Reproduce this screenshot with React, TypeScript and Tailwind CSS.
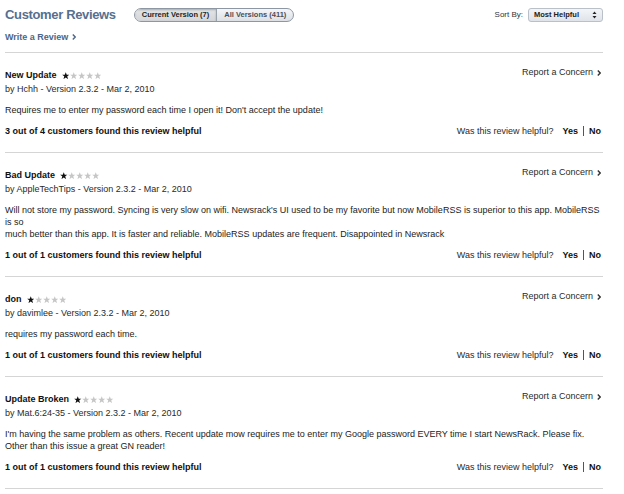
import React from "react";

type Review = {
  title: string;
  author: string;
  body: string[];
  helpful: string;
};

const reviews: Review[] = [
  {
    title: "New Update",
    author: "by Hchh - Version 2.3.2 - Mar 2, 2010",
    body: ["Requires me to enter my password each time I open it! Don't accept the update!"],
    helpful: "3 out of 4 customers found this review helpful",
  },
  {
    title: "Bad Update",
    author: "by AppleTechTips - Version 2.3.2 - Mar 2, 2010",
    body: [
      "Will not store my password. Syncing is very slow on wifi. Newsrack's UI used to be my favorite but now MobileRSS is superior to this app. MobileRSS",
      "is so",
      "much better than this app. It is faster and reliable. MobileRSS updates are frequent. Disappointed in Newsrack",
    ],
    helpful: "1 out of 1 customers found this review helpful",
  },
  {
    title: "don",
    author: "by davimlee - Version 2.3.2 - Mar 2, 2010",
    body: ["requires my password each time."],
    helpful: "1 out of 1 customers found this review helpful",
  },
  {
    title: "Update Broken",
    author: "by Mat.6:24-35 - Version 2.3.2 - Mar 2, 2010",
    body: [
      "I'm having the same problem as others. Recent update mow requires me to enter my Google password EVERY time I start NewsRack. Please fix.",
      "Other than this issue a great GN reader!",
    ],
    helpful: "1 out of 1 customers found this review helpful",
  },
];

// small star used for the rating
function Star({ filled }: { filled: boolean }) {
  return (
    <svg width="7.5" height="7.5" viewBox="0 0 10 10" className="shrink-0">
      <polygon
        points="5,0.2 6.3,3.5 9.8,3.6 7,5.8 8,9.5 5,7.4 2,9.5 3,5.8 0.2,3.6 3.7,3.5"
        fill={filled ? "#111111" : "#c6c6c6"}
      />
    </svg>
  );
}

function Chevron({ color = "#333" }: { color?: string }) {
  return (
    <svg width="4" height="6" viewBox="0 0 4 6" className="ml-[4px] shrink-0">
      <path d="M0.8 0.6 L3.2 3 L0.8 5.4" fill="none" stroke={color} strokeWidth="1.4" />
    </svg>
  );
}

function ReviewItem({ review }: { review: Review }) {
  return (
    <div className="border-t border-[#d5d5d5] pt-[13px] pb-[15px]">
      {/* Title + report */}
      <div className="flex items-start justify-between">
        <div className="pt-[3px]">
          <div className="flex items-center h-[13px] leading-[13px]">
            <span className="font-bold text-[#111]">{review.title}</span>
            <span className="flex items-center gap-[0.5px] ml-[5px]">
              <Star filled />
              <Star filled={false} />
              <Star filled={false} />
              <Star filled={false} />
              <Star filled={false} />
            </span>
          </div>
          <div className="mt-[1px] h-[13px] leading-[13px] text-[#2a2a2a]">{review.author}</div>
        </div>
        <div className="flex items-center h-[13px] leading-[13px] mr-[2px] text-[#2a2a2a]">
          Report a Concern
          <Chevron />
        </div>
      </div>

      {/* Body */}
      <div className="mt-[8px] leading-[12px] text-[#222] whitespace-nowrap">
        {review.body.map((line, i) => (
          <div key={i}>{line}</div>
        ))}
      </div>

      {/* Helpful row */}
      <div className="mt-[9px] flex items-center justify-between h-[12px] leading-[12px]">
        <span className="font-bold text-[#111]">{review.helpful}</span>
        <div className="flex items-center mr-[2px] text-[#2a2a2a]">
          <span>Was this review helpful?</span>
          <span className="font-bold text-[#111] ml-[9px]">Yes</span>
          <span className="mx-[5px] h-[10px] w-px bg-[#555]" />
          <span className="font-bold text-[#111]">No</span>
        </div>
      </div>
    </div>
  );
}

export default function App() {
  return (
    <div className="w-[624px] h-[494px] overflow-hidden bg-white font-['Liberation_Sans',Arial,sans-serif] text-[9px]">
      <div className="ml-[5px] w-[598px]">
        {/* Header */}
        <div className="flex items-center justify-between mt-[8px] h-[14px]">
          <div className="flex items-center">
            <h1 className="text-[13px] leading-[14px] font-bold tracking-[-0.35px] text-[#566f8f]">
              Customer Reviews
            </h1>
            <div className="ml-[18px] flex h-[14px] items-stretch rounded-full border border-[#8d97a3] bg-gradient-to-b from-[#f5f6f8] to-[#dce0e5] overflow-hidden text-[7.5px] font-bold leading-[12px]">
              <div className="flex items-center px-[7px] bg-gradient-to-b from-[#e4e5e7] to-[#d3d5d8] border-r border-[#9aa2ac] text-[#1e1e1e] shadow-[inset_0_1px_2px_rgba(0,0,0,0.25)]">
                Current Version (7)
              </div>
              <div className="flex items-center px-[7px] text-[#4a4f57]">All Versions (411)</div>
            </div>
          </div>
          <div className="flex items-center">
            <span className="text-[8px] text-[#333]">Sort By:</span>
            <div className="ml-[5px] flex h-[14px] w-[75px] items-center justify-between rounded-[3px] border border-[#b9c0c8] bg-gradient-to-b from-[#f3f5f8] to-[#dfe4ea] pl-[5px] pr-[5px] text-[7.5px] font-bold text-[#222]">
              <span>Most Helpful</span>
              <svg width="5" height="8" viewBox="0 0 5 8">
                <polygon points="2.5,0.5 4.5,3 0.5,3" fill="#222" />
                <polygon points="0.5,5 4.5,5 2.5,7.5" fill="#222" />
              </svg>
            </div>
          </div>
        </div>

        <div className="mt-[9px] flex items-center h-[12px] leading-[12px] font-bold text-[#4c668a]">
          Write a Review
          <Chevron color="#4c668a" />
        </div>

        <div className="mt-[9px]">
          {reviews.map((r) => (
            <ReviewItem key={r.title} review={r} />
          ))}
          <div className="border-t border-[#d5d5d5]" />
        </div>
      </div>
    </div>
  );
}
